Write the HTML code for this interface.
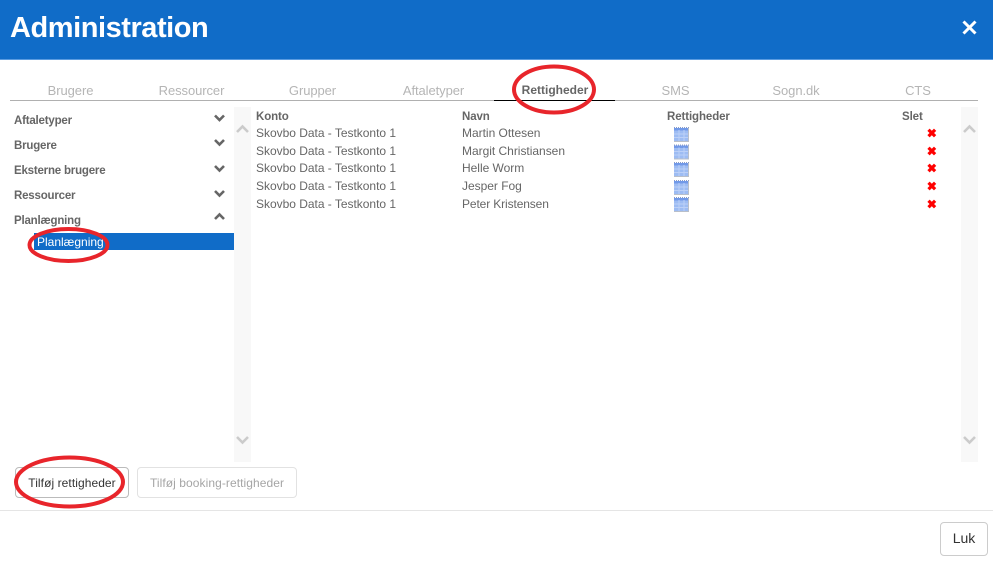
<!DOCTYPE html>
<html lang="da">
<head>
<meta charset="utf-8">
<title>Administration</title>
<style>
html,body{margin:0;padding:0;background:#fff}
body{width:993px;height:565px;overflow:hidden;position:relative;font-family:"Liberation Sans",sans-serif;font-size:12px;color:#666}
.a{position:absolute;white-space:nowrap}
.hdr{left:0;top:0;width:993px;height:59px;background:#106cc8;border-bottom:1px solid #5a9be0}
.title{left:10px;top:11px;font-size:29px;line-height:34px;color:#fff;font-weight:bold;letter-spacing:-.45px}
.tab{top:83px;line-height:15px;font-size:13px;letter-spacing:-.08px;color:#b5b5b5;transform:translateX(-50%)}
.tabline{left:10px;top:100px;width:968px;height:1px;background:#b0b0b0}
.tabact{left:494px;top:100px;width:121px;height:1px;background:#000}
.side{left:14px;font-weight:bold;font-size:11.500px;letter-spacing:-.2px;line-height:14px;color:#666}
.sb{width:17px;height:355px;top:107px;background:#f8f8f8}
.sel{left:34px;top:233px;width:200px;height:17px;background:#106cc8;color:#fff;line-height:18px;font-size:12px;text-indent:3px}
.th{top:110px;font-weight:bold;font-size:11.500px;letter-spacing:-.1px;line-height:14px}
.td{line-height:14px;letter-spacing:-.02px}
.btn{box-sizing:border-box;height:31px;border-radius:4px;background:#fff;text-align:center;line-height:31px;font-size:12px;letter-spacing:.07px}
.foot{left:0;top:510px;width:993px;height:1px;background:#e5e5e5}
svg.a{overflow:visible}
</style>
</head>
<body>
<div class="a hdr"></div>
<div class="a title">Administration</div>
<svg class="a" style="left:962px;top:19.500px" width="15" height="15" viewBox="0 0 15 15"><path d="M1.500 1.500L13.500 13.500M13.500 1.500L1.500 13.500" stroke="#fff" stroke-width="3" fill="none"/></svg>

<div class="a tab" style="left:70.500px">Brugere</div>
<div class="a tab" style="left:191.500px">Ressourcer</div>
<div class="a tab" style="left:312.500px">Grupper</div>
<div class="a tab" style="left:433.500px">Aftaletyper</div>
<div class="a tab" style="left:555px;color:#666;font-weight:bold;font-size:12px;letter-spacing:0">Rettigheder</div>
<div class="a tab" style="left:675.500px">SMS</div>
<div class="a tab" style="left:796px">Sogn.dk</div>
<div class="a tab" style="left:918px">CTS</div>
<div class="a tabline"></div>
<div class="a tabact"></div>

<div class="a side" style="top:114px">Aftaletyper</div>
<div class="a side" style="top:139px">Brugere</div>
<div class="a side" style="top:164px">Eksterne brugere</div>
<div class="a side" style="top:189px">Ressourcer</div>
<div class="a side" style="top:214px">Planlægning</div>
<svg class="a" style="left:213.500px;top:113px" width="12" height="110" viewBox="0 0 12 110" fill="none" stroke="#666" stroke-width="2.600">
<path d="M1 2.500L5.500 7L10 2.500"/><path d="M1 27L5.500 31.500L10 27"/><path d="M1 53L5.500 57.500L10 53"/><path d="M1 78L5.500 82.500L10 78"/><path d="M1 106L5.500 101.500L10 106"/>
</svg>
<div class="a sel">Planlægning</div>

<div class="a sb" style="left:234px"></div>
<div class="a sb" style="left:961px"></div>
<svg class="a" style="left:234px;top:107px" width="17" height="355" viewBox="0 0 17 355" fill="none" stroke="#cbcbcb" stroke-width="2.600">
<path d="M3 25L8.500 19.500L14 25"/><path d="M3 330L8.500 335.500L14 330"/>
</svg>
<svg class="a" style="left:961px;top:107px" width="17" height="355" viewBox="0 0 17 355" fill="none" stroke="#cbcbcb" stroke-width="2.600">
<path d="M3 25L8.500 19.500L14 25"/><path d="M3 330L8.500 335.500L14 330"/>
</svg>

<div class="a th" style="left:256px">Konto</div>
<div class="a th" style="left:462px">Navn</div>
<div class="a th" style="left:667px">Rettigheder</div>
<div class="a th" style="left:902px">Slet</div>

<div class="a td" style="left:256px;top:126px">Skovbo Data - Testkonto 1</div>
<div class="a td" style="left:256px;top:144px">Skovbo Data - Testkonto 1</div>
<div class="a td" style="left:256px;top:161px">Skovbo Data - Testkonto 1</div>
<div class="a td" style="left:256px;top:179px">Skovbo Data - Testkonto 1</div>
<div class="a td" style="left:256px;top:197px">Skovbo Data - Testkonto 1</div>
<div class="a td" style="left:462px;top:126px">Martin Ottesen</div>
<div class="a td" style="left:462px;top:144px">Margit Christiansen</div>
<div class="a td" style="left:462px;top:161px">Helle Worm</div>
<div class="a td" style="left:462px;top:179px">Jesper Fog</div>
<div class="a td" style="left:462px;top:197px;letter-spacing:-.12px">Peter Kristensen</div>

<svg class="a" style="left:0;top:0" width="993" height="565">
<defs>
<g id="cal">
<rect x="0" y="1" width="15" height="13" fill="#9dbcf3"/>
<path d="M0 0.500H15" stroke="#8a9cc8" stroke-width="1" stroke-dasharray="1 1"/>
<rect x="0" y="1" width="15" height="2.500" fill="#7199e8"/>
<path d="M5 3V14M10 3V14M0 7H15M0 10.500H15" stroke="#bcd0f7" stroke-width="1"/>
<path d="M14.500 1V14.500H0" fill="none" stroke="#b9bfc9" stroke-width="1"/>
</g>
<path id="x" d="M1.200 1.200L7.800 7.800M7.800 1.200L1.200 7.800" stroke="#f00" stroke-width="3.200" fill="none"/>
</defs>
<use href="#cal" x="674" y="127"/>
<use href="#cal" x="674" y="144.500"/>
<use href="#cal" x="674" y="162"/>
<use href="#cal" x="674" y="180"/>
<use href="#cal" x="674" y="197"/>
<use href="#x" x="927.300" y="128.500"/>
<use href="#x" x="927.300" y="146.500"/>
<use href="#x" x="927.300" y="163.500"/>
<use href="#x" x="927.300" y="181.500"/>
<use href="#x" x="927.300" y="199.500"/>
</svg>

<div class="a btn" style="left:15px;top:467px;width:114px;border:1px solid #bbb;color:#333">Tilføj rettigheder</div>
<div class="a btn" style="left:137px;top:467px;width:160px;border:1px solid #e2e2e2;color:#a5a5a5">Tilføj booking-rettigheder</div>
<div class="a foot"></div>
<div class="a btn" style="left:940px;top:522px;width:48px;height:34px;line-height:31px;font-size:14px;letter-spacing:0;border:1px solid #ccc;color:#333">Luk</div>

<svg class="a" style="left:0;top:0" width="993" height="565" fill="none" stroke="#e8252b" stroke-width="4">
<ellipse cx="554" cy="89.500" rx="40" ry="23"/>
<ellipse cx="68.500" cy="245" rx="39" ry="16"/>
<ellipse cx="69.500" cy="482" rx="53.500" ry="24.500"/>
</svg>
</body>
</html>
